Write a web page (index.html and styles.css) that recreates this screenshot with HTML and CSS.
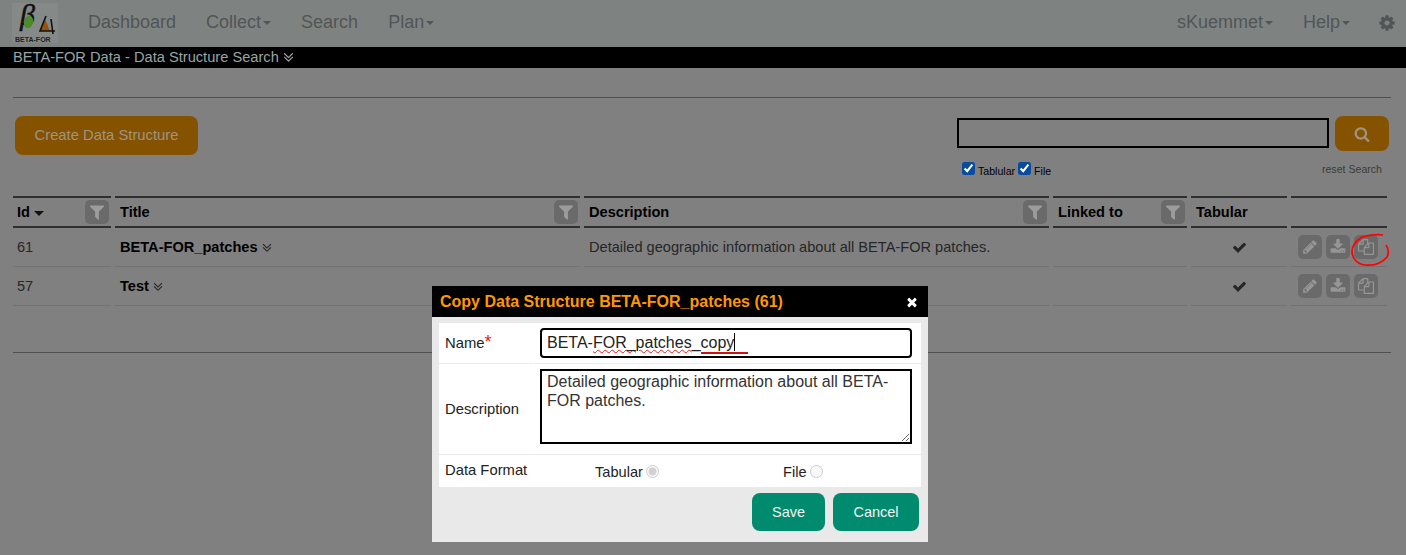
FILE: index.html
```html
<!DOCTYPE html>
<html lang="en">
<head>
    <meta charset="UTF-8">
    <meta name="viewport" content="width=device-width, initial-scale=1.0">
    <title>BETA-FOR Data - Data Structure Search</title>
    <link rel="stylesheet" href="styles.css">
</head>
<body>
    <svg class="icon-defs" aria-hidden="true">
        <symbol id="i-check" viewBox="0 0 1792 1792"><path d="M1671 566q0 40-28 68l-724 724-136 136q-28 28-68 28t-68-28l-136-136-362-362q-28-28-28-68t28-68l136-136q28-28 68-28t68 28l294 295 656-657q28-28 68-28t68 28l136 136q28 28 28 68z"/></symbol>
        <symbol id="i-times" viewBox="0 0 1792 1792"><path d="M1490 1322q0 40-28 68l-136 136q-28 28-68 28t-68-28l-294-294-294 294q-28 28-68 28t-68-28l-136-136q-28-28-28-68t28-68l294-294-294-294q-28-28-28-68t28-68l136-136q28-28 68-28t68 28l294 294 294-294q28-28 68-28t68 28l136 136q28 28 28 68t-28 68l-294 294 294 294q28 28 28 68z"/></symbol>
        <symbol id="i-search" viewBox="0 0 1792 1792"><path d="M1216 832q0-185-131.500-316.500t-316.500-131.500-316.500 131.500-131.500 316.500 131.500 316.500 316.500 131.500 316.500-131.500 131.500-316.500zm512 832q0 52-38 90t-90 38q-54 0-90-38l-343-342q-179 124-399 124-143 0-273.500-55.500t-225-150-150-225-55.500-273.500 55.500-273.500 150-225 225-150 273.500-55.500 273.500 55.500 225 150 150 225 55.500 273.500q0 220-124 399l343 343q37 37 37 90z"/></symbol>
        <symbol id="i-filter" viewBox="0 0 1792 1792"><path d="M1595 295q17 41-14 70l-493 493v742q0 42-39 59-13 5-25 5-27 0-45-19l-256-256q-19-19-19-45v-486l-493-493q-31-29-14-70 17-39 59-39h1280q42 0 59 39z"/></symbol>
        <symbol id="i-pencil" viewBox="0 0 1792 1792"><path d="M491 1536l91-91-235-235-91 91v107h128v128h107zm523-928q0-22-22-22-10 0-17 7l-542 542q-7 7-7 17 0 22 22 22 10 0 17-7l542-542q7-7 7-17zm-54-192l416 416-832 832h-416v-416zm683 96q0 53-37 90l-166 166-416-416 166-165q36-38 90-38 53 0 91 38l235 234q37 39 37 91z"/></symbol>
        <symbol id="i-download" viewBox="0 0 1792 1792"><path d="M1344 1344q0-26-19-45t-45-19-45 19-19 45 19 45 45 19 45-19 19-45zm256 0q0-26-19-45t-45-19-45 19-19 45 19 45 45 19 45-19 19-45zm128-224v320q0 40-28 68t-68 28h-1472q-40 0-68-28t-28-68v-320q0-40 28-68t68-28h465l135 136q58 56 136 56t136-56l136-136h464q40 0 68 28t28 68zm-325-569q17 41-14 70l-448 448q-18 19-45 19t-45-19l-448-448q-31-29-14-70 17-39 59-39h256v-448q0-26 19-45t45-19h256q26 0 45 19t19 45v448h256q42 0 59 39z"/></symbol>
        <symbol id="i-copy" viewBox="0 0 1792 1792"><path d="M1696 384q40 0 68 28t28 68v1216q0 40-28 68t-68 28h-960q-40 0-68-28t-28-68v-288h-544q-40 0-68-28t-28-68v-672q0-40 20-88t48-76l408-408q28-28 76-48t88-20h416q40 0 68 28t28 68v328q68-40 128-40h416zm-544 213l-299 299h299v-299zm-640-384l-299 299h299v-299zm196 647l316-316v-416h-384v416q0 40-28 68t-68 28h-416v640h512v-256q0-40 20-88t48-76zm956 804v-1152h-384v416q0 40-28 68t-68 28h-416v640h896z"/></symbol>
        <symbol id="i-cog" viewBox="0 0 1792 1792"><path d="M1152 896q0-106-75-181t-181-75-181 75-75 181 75 181 181 75 181-75 75-181zm512-109v222q0 12-8 23t-20 13l-185 28q-19 54-39 91 35 50 107 138 10 12 10 25t-9 23q-27 37-99 108t-94 71q-12 0-26-9l-138-108q-44 23-91 38-16 136-29 186-7 28-36 28h-222q-14 0-24.500-8.500t-11.500-21.500l-28-184q-49-16-90-37l-141 107q-10 9-25 9-14 0-25-11-126-114-165-168-7-10-7-23 0-12 8-23 15-21 51-66.500t54-70.500q-27-50-41-99l-183-27q-13-2-21-12.500t-8-23.500v-222q0-12 8-23t19-13l186-28q14-46 39-92-40-57-107-138-10-12-10-24 0-10 9-23 26-36 98.500-107.500t94.500-71.500q13 0 26 10l138 107q44-23 91-38 16-136 29-186 7-28 36-28h222q14 0 24.500 8.500t11.500 21.500l28 184q49 16 90 37l142-107q9-9 24-9 13 0 25 10 129 119 165 170 7 8 7 22 0 12-8 23-15 21-51 66.500t-54 70.500q26 50 41 98l183 28q13 2 21 12.500t8 23.500z"/></symbol>
        <symbol id="i-more" viewBox="300 500 1192 1192"><path d="M1395 1184q0 13-10 23l-466 466q-10 10-23 10t-23-10l-466-466q-10-10-10-23t10-23l50-50q10-10 23-10t23 10l393 393 393-393q10-10 23-10t23 10l50 50q10 10 10 23zm0-384q0 13-10 23l-466 466q-10 10-23 10t-23-10l-466-466q-10-10-10-23t10-23l50-50q10-10 23-10t23 10l393 393 393-393q10-10 23-10t23 10l50 50q10 10 10 23z"/></symbol>
    </svg>

    <nav class="navbar">
        <div class="logo">
            <svg viewBox="0 0 46 40" width="46" height="40">
                <text x="8" y="22" class="logo-beta">β</text>
                <ellipse cx="16.500" cy="19" rx="4.500" ry="6.500" fill="#4f8a2a" transform="rotate(15 16.500 19)"/>
                <path d="M33 16 L38 28 L28 28 Z" fill="#94540e"/>
                <path d="M34 13 L28 28 L43 28 M39 16 L41 31" stroke="#111" stroke-width="1.600" fill="none"/>
                <text x="3" y="39" class="logo-name">BETA-FOR</text>
            </svg>
        </div>
        <a class="nav-link">Dashboard</a>
        <a class="nav-link">Collect<span class="caret"></span></a>
        <a class="nav-link">Search</a>
        <a class="nav-link">Plan<span class="caret"></span></a>
        <div class="nav-right">
            <a class="nav-link">sKuemmet<span class="caret"></span></a>
            <a class="nav-link">Help<span class="caret"></span></a>
            <svg class="nav-gear"><use href="#i-cog"/></svg>
        </div>
    </nav>

    <div class="titlebar">BETA-FOR Data - Data Structure Search <svg class="more-light"><use href="#i-more"/></svg></div>

    <main class="content">
        <hr class="rule rule-top">

        <div class="toolbar">
            <button class="btn-orange btn-create">Create Data Structure</button>
            <div class="search-box">
                <div class="search-line">
                    <input type="text" class="search-input">
                    <button class="btn-orange btn-search"><svg><use href="#i-search"/></svg></button>
                </div>
                <div class="search-options">
                    <label class="check"><input type="checkbox" checked> <span>Tablular</span></label>
                    <label class="check"><input type="checkbox" checked> <span>File</span></label>
                    <a class="reset">reset Search</a>
                </div>
            </div>
        </div>

        <table class="grid">
            <colgroup>
                <col class="col-id"><col class="col-title"><col class="col-desc"><col class="col-link"><col class="col-tab"><col class="col-act">
            </colgroup>
            <thead>
                <tr>
                    <th><div class="th-in"><span>Id <span class="caret caret-dark"></span></span><span class="filter"><svg><use href="#i-filter"/></svg></span></div></th>
                    <th><div class="th-in"><span>Title</span><span class="filter"><svg><use href="#i-filter"/></svg></span></div></th>
                    <th><div class="th-in"><span>Description</span><span class="filter"><svg><use href="#i-filter"/></svg></span></div></th>
                    <th><div class="th-in"><span>Linked to</span><span class="filter"><svg><use href="#i-filter"/></svg></span></div></th>
                    <th><div class="th-in"><span>Tabular</span></div></th>
                    <th></th>
                </tr>
            </thead>
            <tbody>
                <tr>
                    <td>61</td>
                    <td><b>BETA-FOR_patches</b> <svg class="more"><use href="#i-more"/></svg></td>
                    <td>Detailed geographic information about all BETA-FOR patches.</td>
                    <td></td>
                    <td class="center"><svg class="tick"><use href="#i-check"/></svg></td>
                    <td class="actions">
                        <span class="act"><svg><use href="#i-pencil"/></svg></span>
                        <span class="act"><svg><use href="#i-download"/></svg></span>
                        <span class="act"><svg><use href="#i-copy"/></svg></span>
                        <svg class="scribble" viewBox="0 0 40 34" width="40" height="34"><path d="M32 2C25 1 15 3 11 4C5 8 1 13 1 18C1 25 6 31 14 32C24 33 31 30 36 24C38 20 37 15 35 12" fill="none" stroke="#f00" stroke-width="1.700"/></svg>
                    </td>
                </tr>
                <tr>
                    <td>57</td>
                    <td><b>Test</b> <svg class="more"><use href="#i-more"/></svg></td>
                    <td></td>
                    <td></td>
                    <td class="center"><svg class="tick"><use href="#i-check"/></svg></td>
                    <td class="actions">
                        <span class="act"><svg><use href="#i-pencil"/></svg></span>
                        <span class="act"><svg><use href="#i-download"/></svg></span>
                        <span class="act"><svg><use href="#i-copy"/></svg></span>
                    </td>
                </tr>
            </tbody>
        </table>

        <hr class="rule rule-bottom">
    </main>

    <div class="modal">
        <div class="modal-head">
            <span>Copy Data Structure BETA-FOR_patches (61)</span>
            <svg class="modal-close"><use href="#i-times"/></svg>
        </div>
        <div class="modal-body">
            <table class="form">
                <tr>
                    <td class="form-label">Name<span class="req">*</span></td>
                    <td class="form-field">
                        <div class="name-input">BETA-<span class="spell">FOR_patches</span>_<span class="typing">copy</span><span class="cursor"></span></div>
                    </td>
                </tr>
                <tr>
                    <td class="form-label">Description</td>
                    <td class="form-field">
                        <textarea class="desc-input" spellcheck="false">Detailed geographic information about all BETA-FOR patches.</textarea>
                    </td>
                </tr>
                <tr>
                    <td class="form-label form-label-top">Data Format</td>
                    <td class="form-field">
                        <div class="radios">
                            <label class="radio radio-tab">Tabular <input type="radio" name="fmt" checked disabled></label>
                            <label class="radio radio-file">File <input type="radio" name="fmt" disabled></label>
                        </div>
                    </td>
                </tr>
            </table>
            <div class="modal-actions">
                <button class="btn-green btn-save">Save</button>
                <button class="btn-green btn-cancel">Cancel</button>
            </div>
        </div>
    </div>
</body>
</html>
```

FILE: styles.css
```css
body {
    font-family: "Liberation Sans", Arial, sans-serif;
    font-size: 14.600px;
    background-color: #808080;
    color: #2b2b2b;
    margin: 0;
    height: 555px;
    overflow: hidden;
    position: relative;
}

.icon-defs {
    display: none;
}

svg {
    fill: currentColor;
}

.navbar {
    display: flex;
    align-items: center;
    box-sizing: border-box;
    height: 47px;
    padding: 0 0 2px 12px;
    background-color: #7e8382;
    color: #515555;
}

.logo {
    width: 46px;
    height: 40px;
    margin-right: 15px;
    background-color: #858a89;
}

.logo svg {
    display: block;
    overflow: visible;
}

.logo-beta {
    font-family: "Liberation Serif", serif;
    font-style: italic;
    font-size: 30px;
    fill: #111;
    stroke: #111;
    stroke-width: 0.500px;
}

.logo-name {
    font-family: "Liberation Sans", Arial, sans-serif;
    font-size: 7px;
    font-weight: bold;
    fill: #222;
}

.nav-link {
    font-size: 18px;
    padding: 0 15px;
}

.caret {
    display: inline-block;
    width: 0;
    height: 0;
    margin-left: 2px;
    vertical-align: middle;
    border-top: 4px solid;
    border-left: 4px solid transparent;
    border-right: 4px solid transparent;
}

.caret-dark {
    margin-left: 0;
    border-top-width: 5px;
    border-left-width: 5px;
    border-right-width: 5px;
    color: #111;
}

.nav-right {
    display: flex;
    align-items: center;
    margin-left: auto;
}

.nav-gear {
    width: 18px;
    height: 18px;
    margin: 0 10px 0 13px;
}

.titlebar {
    height: 21px;
    line-height: 21px;
    padding-left: 13px;
    background-color: #000;
    color: #9aa5a5;
    font-size: 14.650px;
}

.more-light {
    width: 11px;
    height: 11px;
    vertical-align: 0;
}

.content {
    padding: 0 15px 0 13px;
}

.rule {
    border: none;
    border-top: 1px solid #505050;
    margin: 0;
}

.rule-top {
    margin-top: 29px;
}

.rule-bottom {
    margin-top: 46px;
}

.toolbar {
    display: flex;
    justify-content: space-between;
    padding: 18px 2px 0;
    height: 80px;
}

.btn-orange {
    background-color: #855200;
    color: #9e9480;
    border: none;
    border-radius: 8px;
    font-family: inherit;
}

.btn-create {
    width: 183px;
    height: 39px;
    padding-bottom: 3px;
    font-size: 14.800px;
}

.search-box {
    width: 432px;
}

.search-line {
    display: flex;
    align-items: flex-start;
    gap: 6px;
}

.search-input {
    box-sizing: border-box;
    width: 372px;
    height: 30px;
    margin-top: 2px;
    background: transparent;
    border: 2px solid #000;
    outline: none;
}

.btn-search {
    width: 54px;
    height: 35px;
    padding: 0;
}

.btn-search svg {
    width: 16px;
    height: 16px;
    vertical-align: middle;
}

.search-options {
    display: flex;
    align-items: flex-start;
    margin: 11px 0 0 5px;
    font-size: 10.600px;
    color: #000;
}

.check {
    display: flex;
    align-items: flex-start;
    gap: 3px;
    margin-right: 3px;
}

.check span {
    padding-top: 3px;
}

.check input {
    width: 13px;
    height: 13px;
    margin: 0;
    accent-color: #0c4a9c;
}

.reset {
    margin-left: auto;
    margin-right: 7px;
    padding-top: 1px;
    color: #3b3b3b;
}

.grid {
    border-collapse: separate;
    border-spacing: 4px 0;
    table-layout: fixed;
    width: 1382px;
    margin-left: -4px;
}

.col-id { width: 98px; }
.col-title { width: 465px; }
.col-desc { width: 465px; }
.col-link { width: 134px; }
.col-tab { width: 96px; }
.col-act { width: 96px; }

.grid th {
    box-sizing: border-box;
    height: 32px;
    padding: 0;
    text-align: left;
    color: #000;
    border-top: 2px solid #2f2f2f;
    border-bottom: 2px solid #2f2f2f;
}

.th-in {
    display: flex;
    align-items: center;
    justify-content: space-between;
    padding: 0 2px 0 5px;
}

.grid th:first-child .th-in {
    padding-left: 4px;
}

.filter {
    display: flex;
    align-items: center;
    justify-content: center;
    width: 24px;
    height: 24px;
    background-color: #6a6a6a;
    border-radius: 5px;
    color: #9c9c9c;
}

.filter svg {
    width: 18px;
    height: 18px;
}

.grid td {
    box-sizing: border-box;
    height: 39px;
    padding: 0 5px;
    border-bottom: 1px solid #727272;
    color: #262626;
}

.grid td:first-child {
    padding-left: 4px;
}

.grid b {
    color: #000;
}

.more {
    width: 10px;
    height: 10px;
    vertical-align: 0;
}

.center {
    text-align: center;
}

.tick {
    width: 15px;
    height: 15px;
    vertical-align: middle;
}

.actions {
    position: relative;
    white-space: nowrap;
}

.grid .actions {
    padding: 0 0 1px 7px;
}

.act {
    display: inline-flex;
    align-items: center;
    justify-content: center;
    width: 24px;
    height: 24px;
    background-color: #6a6a6a;
    border-radius: 5px;
    color: #969696;
    vertical-align: middle;
}

.act svg {
    width: 16px;
    height: 16px;
}

.scribble {
    position: absolute;
    left: 60px;
    top: 5px;
}

.modal {
    position: absolute;
    left: 432px;
    top: 286px;
    width: 496px;
    height: 256px;
    background-color: #e9e9e9;
}

.modal-head {
    display: flex;
    align-items: center;
    justify-content: space-between;
    height: 31px;
    padding: 0 9px 0 8px;
    background-color: #000;
    color: #ff9800;
    font-size: 16px;
    font-weight: bold;
}

.modal-close {
    width: 14px;
    height: 14px;
    color: #fff;
}

.modal-body {
    padding: 6px 7px;
}

.form {
    width: 482px;
    border-collapse: separate;
    border-spacing: 0;
    background-color: #fff;
    color: #222;
    font-size: 14.800px;
}

.form td {
    box-sizing: border-box;
    padding: 0;
    border-top: 1px solid #e9e9e9;
}

.form tr:first-child td {
    border-top: none;
}

.form-label {
    width: 96px;
    padding-left: 6px !important;
    padding-bottom: 1px !important;
    border-right: 3px solid #fff;
}

.form-label-top {
    vertical-align: top;
    padding-top: 7px !important;
}

.form-field {
    padding-left: 6px !important;
    padding-right: 9px !important;
    border-right: 0;
}

.req {
    color: #f02000;
    font-size: 18px;
    line-height: 10px;
}

.name-input {
    box-sizing: border-box;
    height: 30px;
    margin: 5px 0;
    padding-left: 5px;
    line-height: 26px;
    border: 2px solid #000;
    border-radius: 4px;
    font-size: 16px;
    color: #222;
}

.spell {
    text-decoration: underline wavy #e02020 1px;
}

.typing {
    position: relative;
}

.typing::after {
    content: "";
    position: absolute;
    left: 0;
    bottom: -3px;
    width: 47px;
    height: 2px;
    background-color: #d01010;
}

.cursor {
    display: inline-block;
    width: 1px;
    height: 18px;
    background-color: #000;
    vertical-align: -3px;
}

.desc-input {
    display: block;
    box-sizing: border-box;
    width: 372px;
    height: 75px;
    margin: 5px 0 10px;
    padding: 1px 5px;
    border: 2px solid #000;
    border-radius: 0;
    outline: none;
    font-family: inherit;
    font-size: 16px;
    line-height: 19px;
    color: #333;
}

.radios {
    box-sizing: border-box;
    display: flex;
    height: 32px;
    padding-top: 2px;
    align-items: center;
    font-size: 14.600px;
}

.radio {
    display: flex;
    align-items: center;
    gap: 3px;
    color: #222;
}

.radio input {
    margin: 0 0 2px;
    width: 13px;
    height: 13px;
}

.radio-tab {
    margin-left: 55px;
    width: 188px;
}

.modal-actions {
    display: flex;
    justify-content: flex-end;
    gap: 8px;
    margin-top: 6px;
    padding-right: 2px;
}

.btn-green {
    height: 38px;
    background-color: #008a6e;
    color: #f2f2f2;
    border: none;
    border-radius: 8px;
    font-family: inherit;
    font-size: 14.500px;
}

.btn-save {
    width: 73px;
}

.btn-cancel {
    width: 86px;
}
```
